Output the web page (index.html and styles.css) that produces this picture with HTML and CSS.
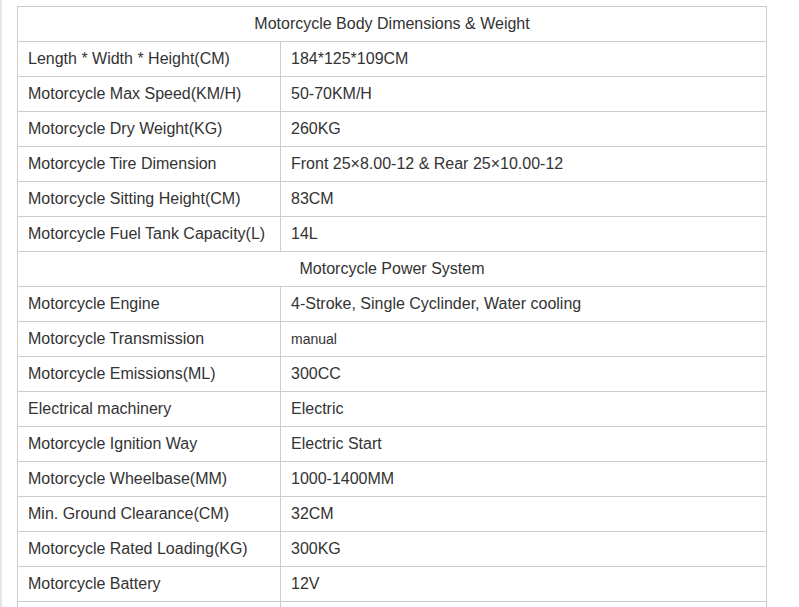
FILE: index.html
```html
<!DOCTYPE html>
<html>
<head>
<meta charset="utf-8">
<link rel="stylesheet" href="styles.css">
</head>
<body>
<div class="page">
<table class="specs">
<colgroup><col class="c1"><col class="c2"></colgroup>
<tr><td class="head" colspan="2">Motorcycle Body Dimensions &amp; Weight</td></tr>
<tr><td>Length * Width * Height(CM)</td><td>184*125*109CM</td></tr>
<tr><td>Motorcycle Max Speed(KM/H)</td><td>50-70KM/H</td></tr>
<tr><td>Motorcycle Dry Weight(KG)</td><td>260KG</td></tr>
<tr><td>Motorcycle Tire Dimension</td><td>Front 25×8.00-12 &amp; Rear 25×10.00-12</td></tr>
<tr><td>Motorcycle Sitting Height(CM)</td><td>83CM</td></tr>
<tr><td>Motorcycle Fuel Tank Capacity(L)</td><td>14L</td></tr>
<tr><td class="head" colspan="2">Motorcycle Power System</td></tr>
<tr><td>Motorcycle Engine</td><td>4-Stroke, Single Cyclinder, Water cooling</td></tr>
<tr><td>Motorcycle Transmission</td><td class="small">manual</td></tr>
<tr><td>Motorcycle Emissions(ML)</td><td>300CC</td></tr>
<tr><td>Electrical machinery</td><td>Electric</td></tr>
<tr><td>Motorcycle Ignition Way</td><td>Electric Start</td></tr>
<tr><td>Motorcycle Wheelbase(MM)</td><td>1000-1400MM</td></tr>
<tr><td>Min. Ground Clearance(CM)</td><td>32CM</td></tr>
<tr><td>Motorcycle Rated Loading(KG)</td><td>300KG</td></tr>
<tr><td>Motorcycle Battery</td><td>12V</td></tr>
<tr><td>&nbsp;</td><td>&nbsp;</td></tr>
</table>
</div>
</body>
</html>
```

FILE: styles.css
```css
html, body {
  margin: 0;
  padding: 0;
  background: #fff;
}
body {
  font-family: "Liberation Sans", Arial, sans-serif;
  color: #333;
}
.page {
  border-left: 2px solid #e6e6e6;
  padding: 6px 0 6px 15px;
}
.specs {
  border-collapse: collapse;
  width: 750px;
  table-layout: fixed;
}
.c1 { width: 263px; }
.specs td {
  border: 1px solid #ccc;
  padding: 5px 10px;
  font-size: 16px;
  line-height: 24px;
  height: 24px;
  white-space: nowrap;
}
.specs td.head {
  text-align: center;
}
.specs td.small {
  font-size: 14px;
}
```
